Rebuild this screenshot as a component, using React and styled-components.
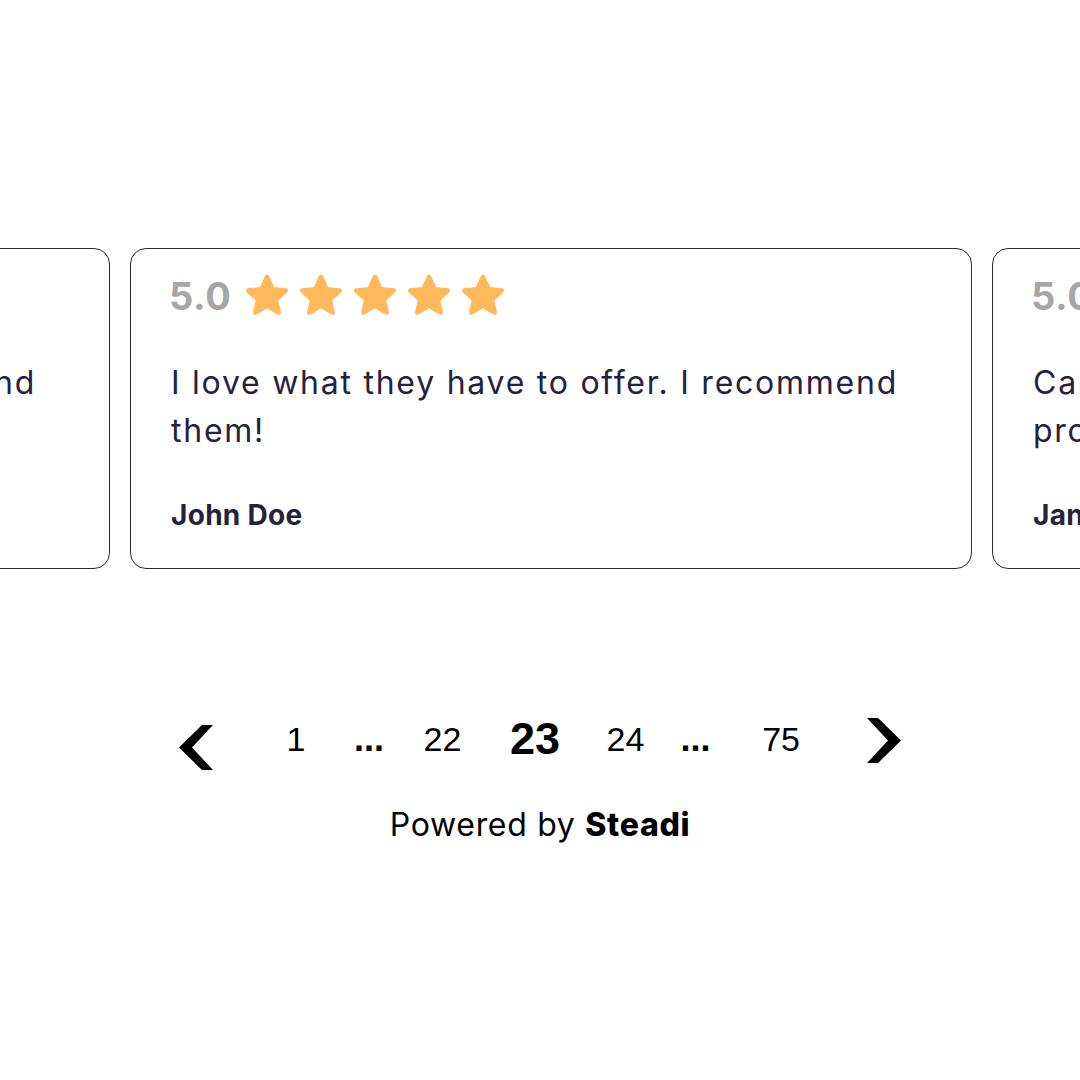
import styled, { createGlobalStyle } from "styled-components";

const GlobalStyle = createGlobalStyle`
  html, body {
    margin: 0;
    padding: 0;
    background: #ffffff;
  }
  body {
    font-family: "Inter", "Liberation Sans", sans-serif;
  }
`;

const CARD_W = 842;
const CARD_GAP = 20;

const reviews = [
  { text: "I love what they have to offer. I recommend them!", name: "John Doe" },
  { text: "I love what they have to offer. I recommend them!", name: "John Doe" },
  { text: "Can't say enough good things about their products!", name: "Jane Smith" },
];

const Page = styled.div`
  width: 1080px;
  height: 1080px;
  overflow: hidden;
  padding-top: 248px;
  box-sizing: border-box;
`;

const Viewport = styled.div`
  width: 100%;
  overflow: hidden;
`;

const Track = styled.div`
  display: flex;
  gap: ${CARD_GAP}px;
  width: max-content;
  transform: translateX(${(p) => p.$offset}px);
`;

const Card = styled.div`
  width: ${CARD_W}px;
  height: 321px;
  box-sizing: border-box;
  border: 1px solid #2b2b2b;
  border-radius: 16px;
  padding: 24px 40px 0 40px;
  flex-shrink: 0;
`;

const RatingRow = styled.div`
  display: flex;
  align-items: center;
  gap: 13px;
  height: 46px;
  margin-left: -2px;
`;

const Score = styled.span`
  font-size: 38px;
  font-weight: 700;
  color: #a6a6a6;
  letter-spacing: 0.6px;
`;

const Stars = styled.div`
  display: flex;
  gap: 8px;
`;

const Quote = styled.p`
  margin: 40px 0 0 0;
  font-size: 32px;
  line-height: 48px;
  letter-spacing: 1.75px;
  color: #25233c;
  font-weight: 400;
`;

const Author = styled.div`
  margin-top: 43px;
  font-size: 28px;
  font-weight: 700;
  letter-spacing: 0.3px;
  color: #25233c;
`;

const Pager = styled.div`
  display: grid;
  grid-template-columns: 99.5px 86.75px 73.5px 73.25px 112px 68.75px 71.5px 99.5px 107px;
  justify-content: center;
  align-items: start;
  margin-top: 147px;
  padding-left: 4px;
  font-family: "Liberation Sans", Arial, sans-serif;
  color: #000;
`;

const PageItem = styled.span`
  display: block;
  text-align: center;
  font-size: ${(p) => p.$size}px;
  line-height: ${(p) => p.$size}px;
  font-weight: ${(p) => (p.$bold ? 700 : 400)};
  margin-top: ${(p) => p.$top}px;
  padding-left: ${(p) => p.$pad || 0}px;
`;

const Arrow = styled.svg`
  display: block;
  justify-self: center;
  width: 34px;
  height: 45px;
  margin-top: ${(p) => p.$top}px;
`;

const Powered = styled.div`
  margin-top: 35px;
  text-align: center;
  font-size: 32px;
  letter-spacing: 0.7px;
  color: #000;
  b {
    font-weight: 800;
  }
`;

const Star = () => (
  <svg width="46" height="44" viewBox="0 0 46 44">
    <path
      d="M23 3 L28.6 15.2 L41.8 16.6 L31.9 25.6 L34.7 38.6 L23 31.9 L11.3 38.6 L14.1 25.6 L4.2 16.6 L17.4 15.2 Z"
      fill="#ffb85a"
      stroke="#ffb85a"
      strokeWidth="4.5"
      strokeLinejoin="round"
    />
  </svg>
);

const ReviewCard = ({ review }) => (
  <Card>
    <RatingRow>
      <Score>5.0</Score>
      <Stars>
        {[0, 1, 2, 3, 4].map((i) => (
          <Star key={i} />
        ))}
      </Stars>
    </RatingRow>
    <Quote>{review.text}</Quote>
    <Author>{review.name}</Author>
  </Card>
);

const pages = [
  { label: "1", size: 34, top: 6, pad: 14 },
  { label: "...", size: 36, top: 4.5, bold: true },
  { label: "22", size: 34, top: 6 },
  { label: "23", size: 45, top: 0, bold: true },
  { label: "24", size: 34, top: 6 },
  { label: "...", size: 36, top: 4.5, bold: true },
  { label: "75", size: 34, top: 6 },
];

export default function App() {
  return (
    <>
      <GlobalStyle />
      <Page>
        <Viewport>
          <Track $offset={-(CARD_W + CARD_GAP) + 130}>
            {reviews.map((r, i) => (
              <ReviewCard key={i} review={r} />
            ))}
          </Track>
        </Viewport>
        <Pager>
          <Arrow $top={9} viewBox="0 0 34 45">
            <path d="M23 0 L34 0 L13 22.5 L34 45 L23 45 L0 22.5 Z" fill="#000" />
          </Arrow>
          {pages.map((p, i) => (
            <PageItem key={i} $size={p.size} $top={p.top} $bold={p.bold} $pad={p.pad}>
              {p.label}
            </PageItem>
          ))}
          <Arrow $top={2} viewBox="0 0 34 45">
            <path d="M0 0 L11 0 L34 22.5 L11 45 L0 45 L21 22.5 Z" fill="#000" />
          </Arrow>
        </Pager>
        <Powered>
          Powered by <b>Steadi</b>
        </Powered>
      </Page>
    </>
  );
}
